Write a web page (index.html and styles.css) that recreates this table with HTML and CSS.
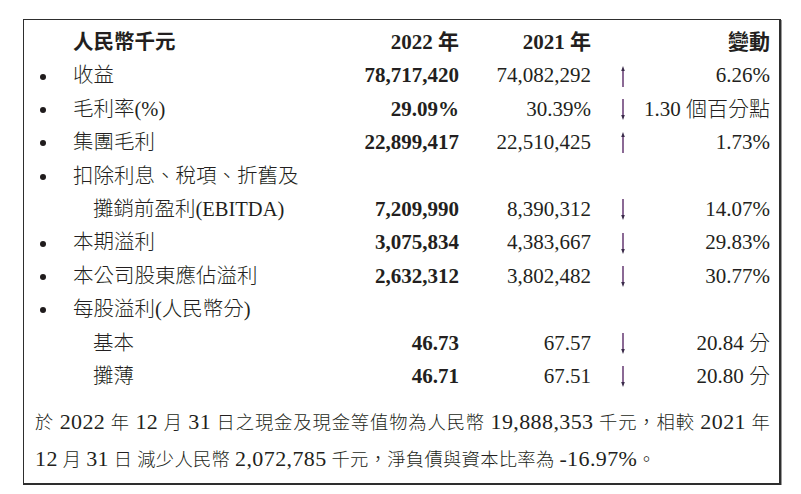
FILE: index.html
```html
<!DOCTYPE html>
<html lang="zh-Hant">
<head>
<meta charset="utf-8">
<title>財務摘要</title>
<link rel="stylesheet" href="styles.css">
</head>
<body>
<div class="panel">
  <div class="table">
    <div class="row head">
      <span class="dotcell"></span>
      <span class="label">人民幣千元</span>
      <span class="v22">2022 年</span>
      <span class="v21">2021 年</span>
      <span class="arr"></span>
      <span class="chg">變動</span>
    </div>
    <div class="row">
      <span class="dotcell"><i class="dot"></i></span>
      <span class="label">收益</span>
      <span class="v22">78,717,420</span>
      <span class="v21">74,082,292</span>
      <span class="arr"><svg class="up" width="8" height="21" viewBox="0 0 8 21"><line x1="4" y1="3" x2="4" y2="21"/><polygon points="2.2,5 4,0 5.8,5"/></svg></span>
      <span class="chg">6.26%</span>
    </div>
    <div class="row">
      <span class="dotcell"><i class="dot"></i></span>
      <span class="label">毛利率(%)</span>
      <span class="v22">29.09%</span>
      <span class="v21">30.39%</span>
      <span class="arr"><svg class="down" width="8" height="21" viewBox="0 0 8 21"><line x1="4" y1="0" x2="4" y2="18"/><polygon points="2.2,16 4,21 5.8,16"/></svg></span>
      <span class="chg">1.30 個百分點</span>
    </div>
    <div class="row">
      <span class="dotcell"><i class="dot"></i></span>
      <span class="label">集團毛利</span>
      <span class="v22">22,899,417</span>
      <span class="v21">22,510,425</span>
      <span class="arr"><svg class="up" width="8" height="21" viewBox="0 0 8 21"><line x1="4" y1="3" x2="4" y2="21"/><polygon points="2.2,5 4,0 5.8,5"/></svg></span>
      <span class="chg">1.73%</span>
    </div>
    <div class="row">
      <span class="dotcell"><i class="dot"></i></span>
      <span class="label">扣除利息、稅項、折舊及</span>
      <span class="v22"></span>
      <span class="v21"></span>
      <span class="arr"></span>
      <span class="chg"></span>
    </div>
    <div class="row">
      <span class="dotcell"></span>
      <span class="label sub">攤銷前盈利(EBITDA)</span>
      <span class="v22">7,209,990</span>
      <span class="v21">8,390,312</span>
      <span class="arr"><svg class="down" width="8" height="21" viewBox="0 0 8 21"><line x1="4" y1="0" x2="4" y2="18"/><polygon points="2.2,16 4,21 5.8,16"/></svg></span>
      <span class="chg">14.07%</span>
    </div>
    <div class="row">
      <span class="dotcell"><i class="dot"></i></span>
      <span class="label">本期溢利</span>
      <span class="v22">3,075,834</span>
      <span class="v21">4,383,667</span>
      <span class="arr"><svg class="down" width="8" height="21" viewBox="0 0 8 21"><line x1="4" y1="0" x2="4" y2="18"/><polygon points="2.2,16 4,21 5.8,16"/></svg></span>
      <span class="chg">29.83%</span>
    </div>
    <div class="row">
      <span class="dotcell"><i class="dot"></i></span>
      <span class="label">本公司股東應佔溢利</span>
      <span class="v22">2,632,312</span>
      <span class="v21">3,802,482</span>
      <span class="arr"><svg class="down" width="8" height="21" viewBox="0 0 8 21"><line x1="4" y1="0" x2="4" y2="18"/><polygon points="2.2,16 4,21 5.8,16"/></svg></span>
      <span class="chg">30.77%</span>
    </div>
    <div class="row">
      <span class="dotcell"><i class="dot"></i></span>
      <span class="label">每股溢利(人民幣分)</span>
      <span class="v22"></span>
      <span class="v21"></span>
      <span class="arr"></span>
      <span class="chg"></span>
    </div>
    <div class="row">
      <span class="dotcell"></span>
      <span class="label sub">基本</span>
      <span class="v22">46.73</span>
      <span class="v21">67.57</span>
      <span class="arr"><svg class="down" width="8" height="21" viewBox="0 0 8 21"><line x1="4" y1="0" x2="4" y2="18"/><polygon points="2.2,16 4,21 5.8,16"/></svg></span>
      <span class="chg">20.84 分</span>
    </div>
    <div class="row">
      <span class="dotcell"></span>
      <span class="label sub">攤薄</span>
      <span class="v22">46.71</span>
      <span class="v21">67.51</span>
      <span class="arr"><svg class="down" width="8" height="21" viewBox="0 0 8 21"><line x1="4" y1="0" x2="4" y2="18"/><polygon points="2.2,16 4,21 5.8,16"/></svg></span>
      <span class="chg">20.80 分</span>
    </div>
  </div>
  <p class="note">
    <span class="line just">於 <span class="n">2022</span> 年 <span class="n">12</span> 月 <span class="n">31</span> 日之現金及現金等值物為人民幣 <span class="n">19,888,353</span> 千元，相較 <span class="n">2021</span> 年</span>
    <span class="line"><span class="n">12</span> 月 <span class="n">31</span> 日 減少人民幣 <span class="n">2,072,785</span> 千元，淨負債與資本比率為 <span class="n">-16.97%</span>。</span>
  </p>
</div>
</body>
</html>
```
FILE: styles.css
```css
* { box-sizing: border-box; }

html, body {
  margin: 0;
  padding: 0;
  background: #ffffff;
}

body {
  color: #231f20;
  font-family: "Liberation Serif", "Noto Sans CJK TC", serif;
  font-weight: 300;
}

.panel {
  margin: 19px 0 0 23px;
  width: 758px;
  border: 1px solid #2e2e2e;
  border-right-width: 2px;
  border-bottom-width: 2px;
  box-shadow: 1px 1px 0 #9a9a9a;
  padding: 6px 9px 5px 0;
}

.table {
  display: flex;
  flex-direction: column;
}

.row {
  display: grid;
  grid-template-columns: 49px 266px 120px 132px 66px 113px;
  height: 33.4px;
  line-height: 33.4px;
  font-size: 20.5px;
  white-space: nowrap;
}

.head { font-weight: 700; }

.dotcell {
  display: flex;
  align-items: center;
  padding-left: 16px;
}

.dot {
  display: block;
  width: 6px;
  height: 6px;
  border-radius: 50%;
  background: #1f1b1c;
  margin-top: 1px;
}

.label.sub { padding-left: 20px; }

.v22, .v21, .chg {
  display: flex;
  justify-content: flex-end;
  font-size: 21px;
}

.v22 { font-weight: 700; }

.arr {
  display: flex;
  align-items: center;
  justify-content: center;
  padding-right: 2px;
}

.arr svg line {
  stroke: #5a2a68;
  stroke-width: 1.4;
}

.arr svg polygon {
  fill: #3a2a4a;
}

.note {
  margin: 11px 0 0 11px;
  width: 735px;
  font-size: 18.3px;
  line-height: 36px;
}

.note .line {
  display: block;
  white-space: nowrap;
  letter-spacing: 0.3px;
}

.note .just {
  text-align: justify;
  text-align-last: justify;
  white-space: normal;
}

.note .n {
  font-size: 22px;
  letter-spacing: 0.4px;
}
```
